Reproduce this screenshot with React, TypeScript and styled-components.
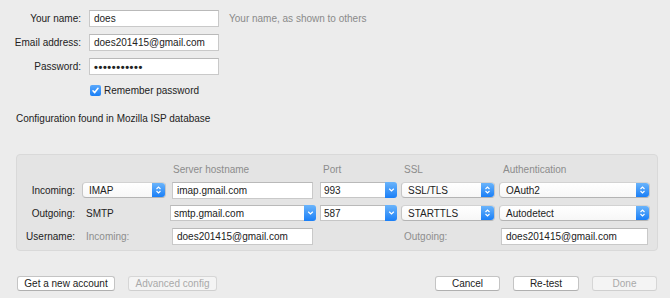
import React from "react";
import styled, { createGlobalStyle } from "styled-components";

const GlobalStyle = createGlobalStyle`
  html, body {
    margin: 0;
    padding: 0;
    background: #ececec;
  }
  body {
    font-family: "Liberation Sans", Arial, sans-serif;
    font-size: 10px;
    color: #222;
  }
`;

const Window = styled.div`
  width: 670px;
  height: 298px;
  background: #ececec;
  display: flex;
  flex-direction: column;
  overflow: hidden;
`;

const Form = styled.div`
  display: grid;
  grid-template-columns: 81px 130px auto;
  grid-auto-rows: 17px;
  column-gap: 8px;
  row-gap: 7px;
  padding-top: 10px;
  align-items: center;
`;

const Label = styled.div`
  text-align: right;
  white-space: nowrap;
`;

const Hint = styled.div`
  color: #8a8a8a;
  padding-left: 2px;
  white-space: nowrap;
`;

const TextField = styled.div<{ $inset?: string }>`
  box-sizing: border-box;
  height: 17px;
  margin: ${(p) => p.$inset || "0"};
  background: #fff;
  border: 1px solid #c9c9c9;
  border-top-color: #b9b9b9;
  padding: 0 4px;
  display: flex;
  align-items: center;
  white-space: nowrap;
  overflow: hidden;
`;

const Dots = styled.span`
  letter-spacing: 0.6px;
  font-size: 11px;
  font-weight: bold;
`;

const CheckRow = styled.label`
  grid-column: 2 / 4;
  display: flex;
  align-items: center;
  gap: 3px;
  margin-left: 1px;
`;

const CheckBox = styled.span`
  width: 11px;
  height: 11px;
  border-radius: 2px;
  background: linear-gradient(#5aa8fb, #1a7ff6);
  display: flex;
  align-items: center;
  justify-content: center;
`;

const Notice = styled.div`
  margin: 14px 0 0 16px;
  line-height: 12px;
`;

const Panel = styled.div`
  margin: 29px 12px 0 16px;
  background: #e4e4e4;
  border: 1px solid #d9d9d9;
  border-radius: 4px;
  padding: 8px 0 5px 0;
  display: grid;
  grid-template-columns: 61px 84px 146px 77px 94px 151px;
  grid-template-rows: 12px 16px 16px 17px;
  column-gap: 4px;
  row-gap: 7px;
  align-items: center;
`;

const RowLabel = styled.div`
  text-align: right;
  padding-right: 3px;
  white-space: nowrap;
`;

const ColHead = styled.div<{ $pad?: number }>`
  color: #8c8c8c;
  padding-left: ${(p) => p.$pad ?? 3}px;
  white-space: nowrap;
`;

const Plain = styled.div<{ $muted?: boolean; $pad?: number }>`
  color: ${(p) => (p.$muted ? "#8e8e8e" : "#222")};
  padding-left: ${(p) => p.$pad ?? 4}px;
  white-space: nowrap;
`;

const Popup = styled.div`
  box-sizing: border-box;
  height: 16px;
  display: flex;
  border: 1px solid #c6c6c6;
  border-top-color: #d2d2d2;
  border-bottom-color: #b4b4b4;
  border-radius: 4px;
  background: linear-gradient(#ffffff, #f7f7f7);
  overflow: hidden;
`;

const PopupText = styled.div`
  flex: 1;
  padding-left: 6px;
  display: flex;
  align-items: center;
  white-space: nowrap;
`;

const BlueEnd = styled.div<{ $w?: number }>`
  width: ${(p) => p.$w ?? 13}px;
  background: linear-gradient(#6ab4fb, #1a7ff7);
  display: flex;
  align-items: center;
  justify-content: center;
`;

const Combo = styled.div<{ $inset?: string }>`
  box-sizing: border-box;
  height: 16px;
  margin: ${(p) => p.$inset || "0"};
  display: flex;
`;

const ComboField = styled.div`
  flex: 1;
  background: #fff;
  border: 1px solid #c6c6c6;
  border-right: none;
  border-top-color: #b9b9b9;
  padding-left: 3px;
  display: flex;
  align-items: center;
  white-space: nowrap;
`;

const ComboButton = styled(BlueEnd)`
  border-radius: 0 3px 3px 0;
`;

const Footer = styled.div`
  margin-top: 25px;
  padding: 0 13px 0 17px;
  display: flex;
  gap: 13px;
`;

const Spacer = styled.div`
  flex: 1;
`;

const Button = styled.button<{ $w: number; $disabled?: boolean }>`
  box-sizing: border-box;
  width: ${(p) => p.$w}px;
  height: 15px;
  padding: 0;
  font-family: "Liberation Sans", Arial, sans-serif;
  font-size: 10px;
  line-height: 13px;
  color: ${(p) => (p.$disabled ? "#a9a9a9" : "#222")};
  background: ${(p) => (p.$disabled ? "#f4f4f4" : "#fff")};
  border: 1px solid ${(p) => (p.$disabled ? "#d6d6d6" : "#c4c4c4")};
  border-bottom-color: ${(p) => (p.$disabled ? "#cfcfcf" : "#b0b0b0")};
  border-radius: 3px;
`;

const UpDown = () => (
  <svg width="7" height="10" viewBox="0 0 7 10">
    <path d="M1.5 4 L3.5 2 L5.5 4 M1.5 6 L3.5 8 L5.5 6" stroke="#fff" strokeWidth="1.1" fill="none" />
  </svg>
);

const Down = () => (
  <svg width="7" height="6" viewBox="0 0 7 6">
    <path d="M1.2 1.8 L3.5 4 L5.8 1.8" stroke="#fff" strokeWidth="1.2" fill="none" />
  </svg>
);

const Check = () => (
  <svg width="9" height="9" viewBox="0 0 9 9">
    <path d="M2 4.8 L3.7 6.6 L7 2.3" stroke="#fff" strokeWidth="1.6" fill="none" strokeLinecap="round" strokeLinejoin="round" />
  </svg>
);

const PopupSelect = ({ value }: { value: string }) => (
  <Popup>
    <PopupText>{value}</PopupText>
    <BlueEnd>
      <UpDown />
    </BlueEnd>
  </Popup>
);

const ComboSelect = ({ value, inset }: { value: string; inset?: string }) => (
  <Combo $inset={inset}>
    <ComboField>{value}</ComboField>
    <ComboButton $w={12}>
      <Down />
    </ComboButton>
  </Combo>
);

export default function App() {
  return (
    <Window>
      <GlobalStyle />
      <Form>
        <Label>Your name:</Label>
        <TextField>does</TextField>
        <Hint>Your name, as shown to others</Hint>

        <Label>Email address:</Label>
        <TextField>does201415@gmail.com</TextField>
        <div />

        <Label>Password:</Label>
        <TextField>
          <Dots>•••••••••••</Dots>
        </TextField>
        <div />

        <div />
        <CheckRow>
          <CheckBox>
            <Check />
          </CheckBox>
          Remember password
        </CheckRow>
      </Form>

      <Notice>Configuration found in Mozilla ISP database</Notice>

      <Panel>
        <div />
        <div />
        <ColHead>Server hostname</ColHead>
        <ColHead>Port</ColHead>
        <ColHead>SSL</ColHead>
        <ColHead $pad={4}>Authentication</ColHead>

        <RowLabel>Incoming:</RowLabel>
        <PopupSelect value="IMAP" />
        <TextField $inset="0 3px 0 2px">imap.gmail.com</TextField>
        <ComboSelect value="993" />
        <PopupSelect value="SSL/TLS" />
        <PopupSelect value="OAuth2" />

        <RowLabel>Outgoing:</RowLabel>
        <Plain>SMTP</Plain>
        <ComboSelect value="smtp.gmail.com" />
        <ComboSelect value="587" />
        <PopupSelect value="STARTTLS" />
        <PopupSelect value="Autodetect" />

        <RowLabel>Username:</RowLabel>
        <Plain $muted>Incoming:</Plain>
        <TextField $inset="0 3px 0 2px">does201415@gmail.com</TextField>
        <div />
        <Plain $muted $pad={3}>Outgoing:</Plain>
        <TextField $inset="0 2px 0 2px">does201415@gmail.com</TextField>
      </Panel>

      <Footer>
        <Button $w={98}>Get a new account</Button>
        <Button $w={89} $disabled>
          Advanced config
        </Button>
        <Spacer />
        <Button $w={65}>Cancel</Button>
        <Button $w={66}>Re-test</Button>
        <Button $w={65} $disabled>
          Done
        </Button>
      </Footer>
    </Window>
  );
}
